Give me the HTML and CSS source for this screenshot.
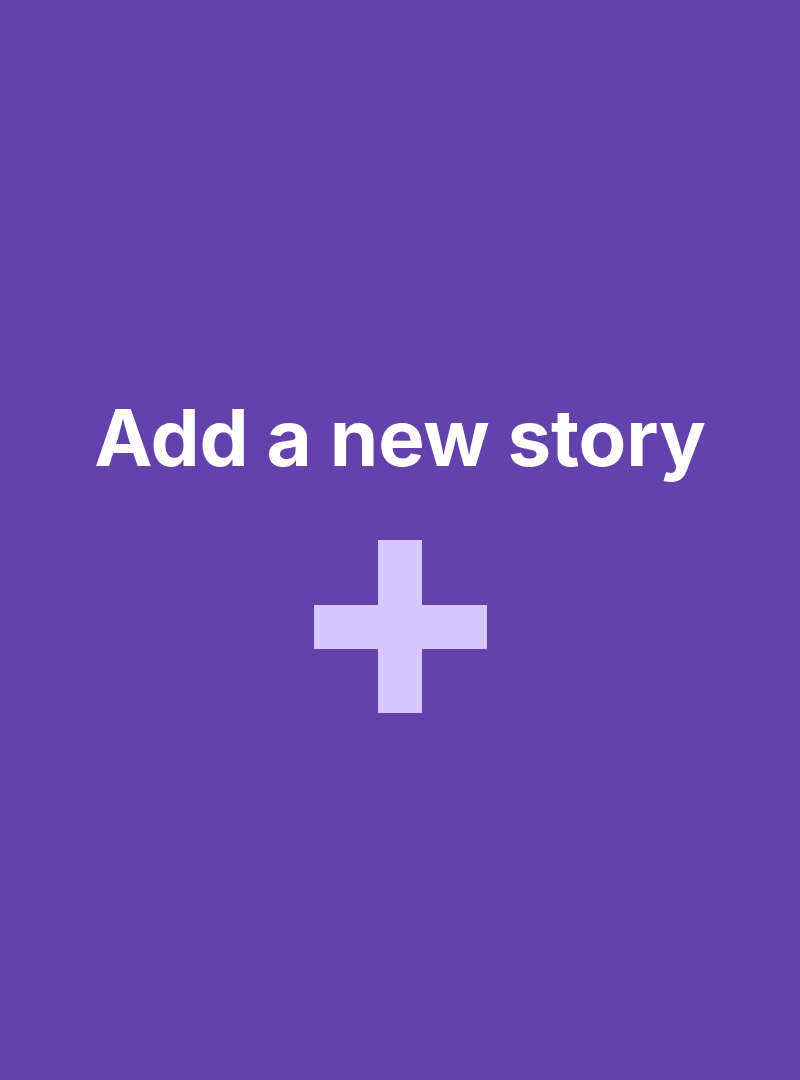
FILE: index.html
```html
<!DOCTYPE html>
<html lang="en">
<head>
<meta charset="utf-8">
<title>Add a new story</title>
<link rel="stylesheet" href="styles.css">
</head>
<body>
<main class="card">
  <h1 class="title">Add a new story</h1>
  <div class="plus" aria-hidden="true">
    <span class="bar bar-v"></span>
    <span class="bar bar-h"></span>
  </div>
</main>
</body>
</html>
```

FILE: styles.css
```css
html, body {
  margin: 0;
  padding: 0;
}
body {
  background: #6243ab;
  font-family: Inter, "Noto Sans", sans-serif;
}
.card {
  height: 1080px;
  box-sizing: border-box;
  display: flex;
  flex-direction: column;
  align-items: center;
  padding-top: 399px;
}
.title {
  margin: 0;
  color: #ffffff;
  font-size: 78px;
  line-height: 1;
  font-weight: 700;
  letter-spacing: -0.25px;
  white-space: nowrap;
}
.plus {
  margin-top: 63px;
  width: 173px;
  height: 173px;
  display: grid;
}
.bar {
  grid-area: 1 / 1;
  background: #d4c8ff;
  place-self: center;
}
.bar-v {
  width: 44px;
  height: 173px;
}
.bar-h {
  width: 173px;
  height: 44px;
}
```
